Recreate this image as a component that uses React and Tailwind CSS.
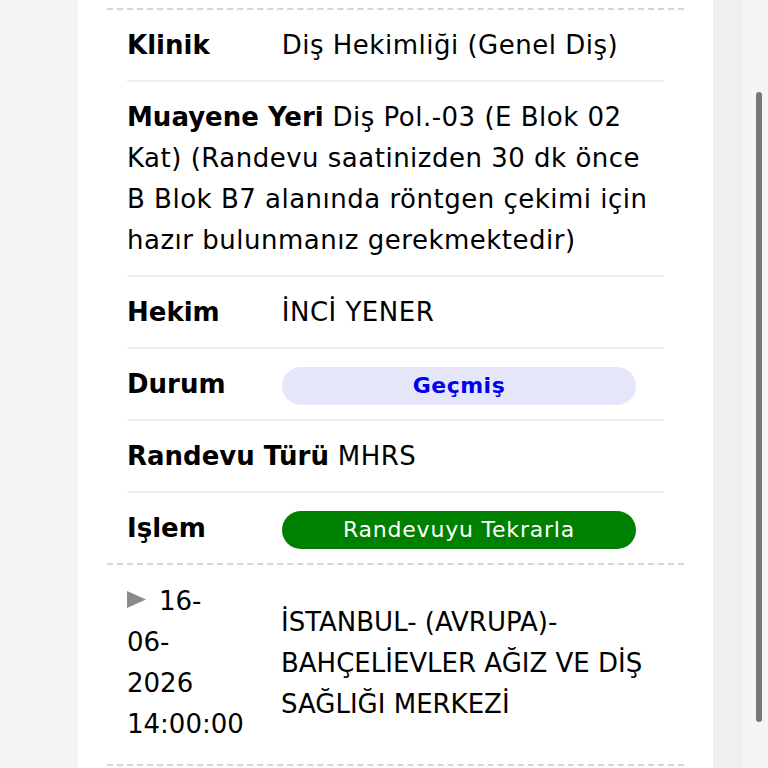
import React from 'react';

const rows = [
    { label: 'Klinik', value: 'Diş Hekimliği (Genel Diş)' },
    { label: 'Muayene Yeri', value: 'Diş Pol.-03 (E Blok 02 Kat) (Randevu saatinizden 30 dk önce B Blok B7 alanında röntgen çekimi için hazır bulunmanız gerekmektedir)' },
    { label: 'Hekim', value: 'İNCİ YENER' },
    { label: 'Durum', badge: 'status' },
    { label: 'Randevu Türü', value: 'MHRS' },
    { label: 'Işlem', badge: 'action' },
];

export default function App() {
    return (
        <div className="relative flex min-h-screen bg-[#f5f5f5] text-black font-['DejaVu_Sans',sans-serif]">
            <div className="ml-[78px] w-[635px] bg-white px-[29px] pt-[8px]">
                {/* Detail block */}
                <div className="border-t-2 border-dashed border-[#d6d6d6] px-[20px]">
                    {rows.map((row, i) => (
                        <div
                            key={row.label}
                            className={`pt-[15px] pb-[14px] text-[26px] leading-[41px] tracking-[0.5px] ${i < rows.length - 1 ? 'border-b-2 border-[#efefef]' : ''}`}
                        >
                            <span className="inline-block min-w-[146px] font-bold tracking-normal">{row.label}</span>{' '}
                            {row.badge === 'status' && (
                                <span className="inline-block w-[66%] rounded-full bg-[#e6e6fa] text-center text-[22px] font-bold leading-[38px] tracking-[0.5px] text-[#0000ee] align-middle">
                                    Geçmiş
                                </span>
                            )}
                            {row.badge === 'action' && (
                                <span className="inline-block w-[66%] rounded-full bg-[#008000] text-center text-[22px] leading-[38px] tracking-[0.8px] text-white align-middle">
                                    Randevuyu Tekrarla
                                </span>
                            )}
                            {row.value}
                        </div>
                    ))}
                </div>

                {/* Next appointment */}
                <div className="border-y-2 border-dashed border-[#d6d6d6] px-[20px] pt-[16px] pb-[19px]">
                    <div className="flex items-center text-[26px] leading-[41px]">
                        <div className="w-[154px] shrink-0">
                            <div className="w-[100px]">
                                <svg width="19" height="17" viewBox="0 0 19 17" className="mr-[13px] inline-block align-[2px]">
                                    <path d="M0 0 L19 8.5 L0 17 Z" fill="#8a8a8a" />
                                </svg>
                                16-06-2026 14:00:00
                            </div>
                        </div>
                        <div className="flex-1">İSTANBUL- (AVRUPA)- BAHÇELİEVLER AĞIZ VE DİŞ SAĞLIĞI MERKEZİ</div>
                    </div>
                </div>
            </div>
            <div className="w-[30px] bg-[#efefef]" />
            <div className="flex-1 bg-[#f5f5f5]" />

            {/* scrollbar thumb */}
            <div className="absolute left-[756px] top-[92px] h-[630px] w-[6px] rounded-full bg-[#777777]" />
        </div>
    );
}
